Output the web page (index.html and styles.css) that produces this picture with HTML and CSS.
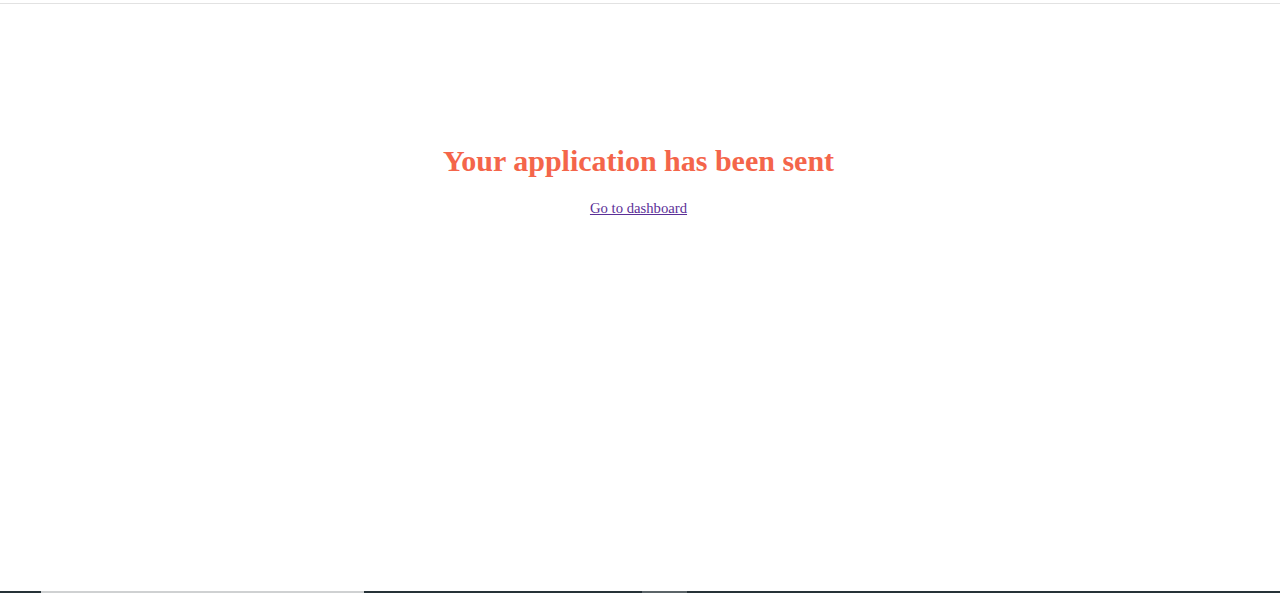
FILE: index.html
```html
<!DOCTYPE html>
<html lang="en">
<head>
<meta charset="utf-8">
<title>Application sent</title>
<link rel="stylesheet" href="styles.css">
</head>
<body>
<div class="page">
  <div class="topline"></div>
  <main class="content">
    <h1 class="title">Your application has been sent</h1>
    <a class="link" href="#">Go to dashboard</a>
  </main>
  <footer class="bottombar">
    <span class="seg dark s1"></span>
    <span class="seg light s2"></span>
    <span class="seg dark s3"></span>
    <span class="seg mid s4"></span>
    <span class="seg dark s5"></span>
  </footer>
</div>
</body>
</html>
```
FILE: styles.css
```css
html, body {
  margin: 0;
  padding: 0;
  background: #ffffff;
}
.page {
  height: 593px;
  display: flex;
  flex-direction: column;
  font-family: "Liberation Serif", "Times New Roman", serif;
}
.topline {
  height: 3px;
  border-bottom: 1px solid #e2e2e2;
  flex: none;
}
.content {
  flex: 1;
  display: flex;
  flex-direction: column;
  align-items: center;
  padding-top: 140px;
  padding-right: 3px;
}
.title {
  margin: 0;
  font-size: 30px;
  font-weight: bold;
  color: #f4654a;
  line-height: 34px;
}
.link {
  margin-top: 22px;
  font-size: 14.7px;
  color: #5b2f97;
  text-decoration: underline;
}
.bottombar {
  flex: none;
  height: 2px;
  display: flex;
}
.seg { display: block; height: 2px; }
.dark { background: #263238; }
.light { background: #cfd1d2; }
.mid { background: #5b6468; }
.s1 { width: 41px; }
.s2 { width: 323px; }
.s3 { width: 278px; }
.s4 { width: 45px; }
.s5 { flex: 1; }
```
